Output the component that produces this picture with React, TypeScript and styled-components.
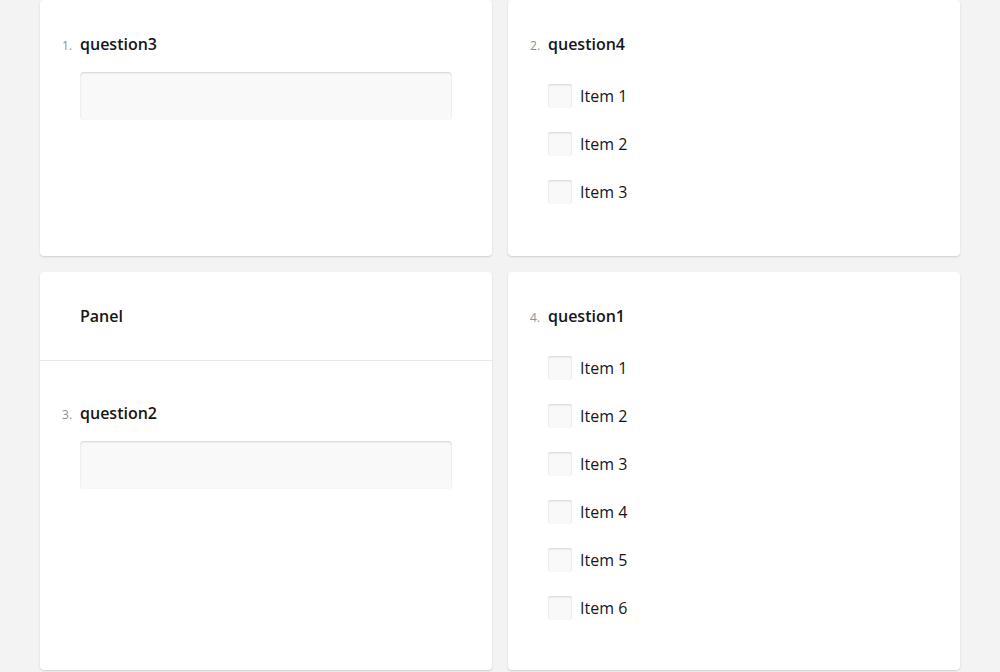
import React from "react";
import styled, { createGlobalStyle } from "styled-components";

const Global = createGlobalStyle`
  html, body { margin: 0; padding: 0; background: #f3f3f3; }
  body { font-family: "Open Sans", "Liberation Sans", sans-serif; color: #161616; }
  * { box-sizing: border-box; }
`;

const Page = styled.div`
  padding: 0 40px 8px 40px;
  display: grid;
  grid-template-columns: 452px 452px;
  column-gap: 16px;
  row-gap: 16px;
  align-items: stretch;
`;

const Card = styled.div`
  background: #fff;
  border-radius: 4px;
  box-shadow: 0 1px 2px rgba(0, 0, 0, 0.15);
  display: flex;
  flex-direction: column;
`;

const Section = styled.div<{ $bottom?: number }>`
  padding: 32px 40px ${(p) => p.$bottom ?? 40}px 40px;
`;

const PanelHeader = styled.div`
  padding: 32px 40px;
  border-bottom: 1px solid #e8e8e8;
  font-size: 16px;
  font-weight: 600;
  line-height: 24px;
`;

const PanelBody = styled.div`
  padding: 40px 40px 40px 40px;
`;

const TitleRow = styled.div`
  display: flex;
  align-items: baseline;
  height: 24px;
  line-height: 24px;
  overflow: visible;
`;

const Num = styled.span`
  width: 18px;
  margin-left: -18px;
  font-size: 12px;
  line-height: 24px;
  color: #909090;
  flex: none;
`;

const Title = styled.span`
  font-size: 16px;
  font-weight: 600;
  line-height: 24px;
  color: #161616;
`;

const TextInput = styled.div`
  margin-top: 16px;
  height: 48px;
  border-radius: 4px;
  background: #f9f9f9;
  box-shadow: inset 0 1px 2px rgba(0, 0, 0, 0.15);
`;

const Items = styled.div`
  margin-top: 16px;
  display: flex;
  flex-direction: column;
`;

const Item = styled.label`
  display: flex;
  align-items: center;
  height: 48px;
  gap: 8px;
  font-size: 16px;
  line-height: 24px;
  color: #161616;
`;

const Box = styled.span`
  width: 24px;
  height: 24px;
  border-radius: 3px;
  background: #f9f9f9;
  box-shadow: inset 0 1px 2px rgba(0, 0, 0, 0.15);
  flex: none;
`;

const Heading = ({ n, t }: { n: number; t: string }) => (
  <TitleRow>
    <Num>{n}.</Num>
    <Title>{t}</Title>
  </TitleRow>
);

const Checks = ({ count }: { count: number }) => (
  <Items>
    {Array.from({ length: count }, (_, i) => (
      <Item key={i}>
        <Box />
        Item {i + 1}
      </Item>
    ))}
  </Items>
);

export default function App() {
  return (
    <>
      <Global />
      <Page>
        <Card>
          <Section>
            <Heading n={1} t="question3" />
            <TextInput />
          </Section>
        </Card>
        <Card>
          <Section>
            <Heading n={2} t="question4" />
            <Checks count={3} />
          </Section>
        </Card>
        <Card>
          <PanelHeader>Panel</PanelHeader>
          <PanelBody>
            <Heading n={3} t="question2" />
            <TextInput />
          </PanelBody>
        </Card>
        <Card>
          <Section $bottom={38}>
            <Heading n={4} t="question1" />
            <Checks count={6} />
          </Section>
        </Card>
      </Page>
    </>
  );
}
